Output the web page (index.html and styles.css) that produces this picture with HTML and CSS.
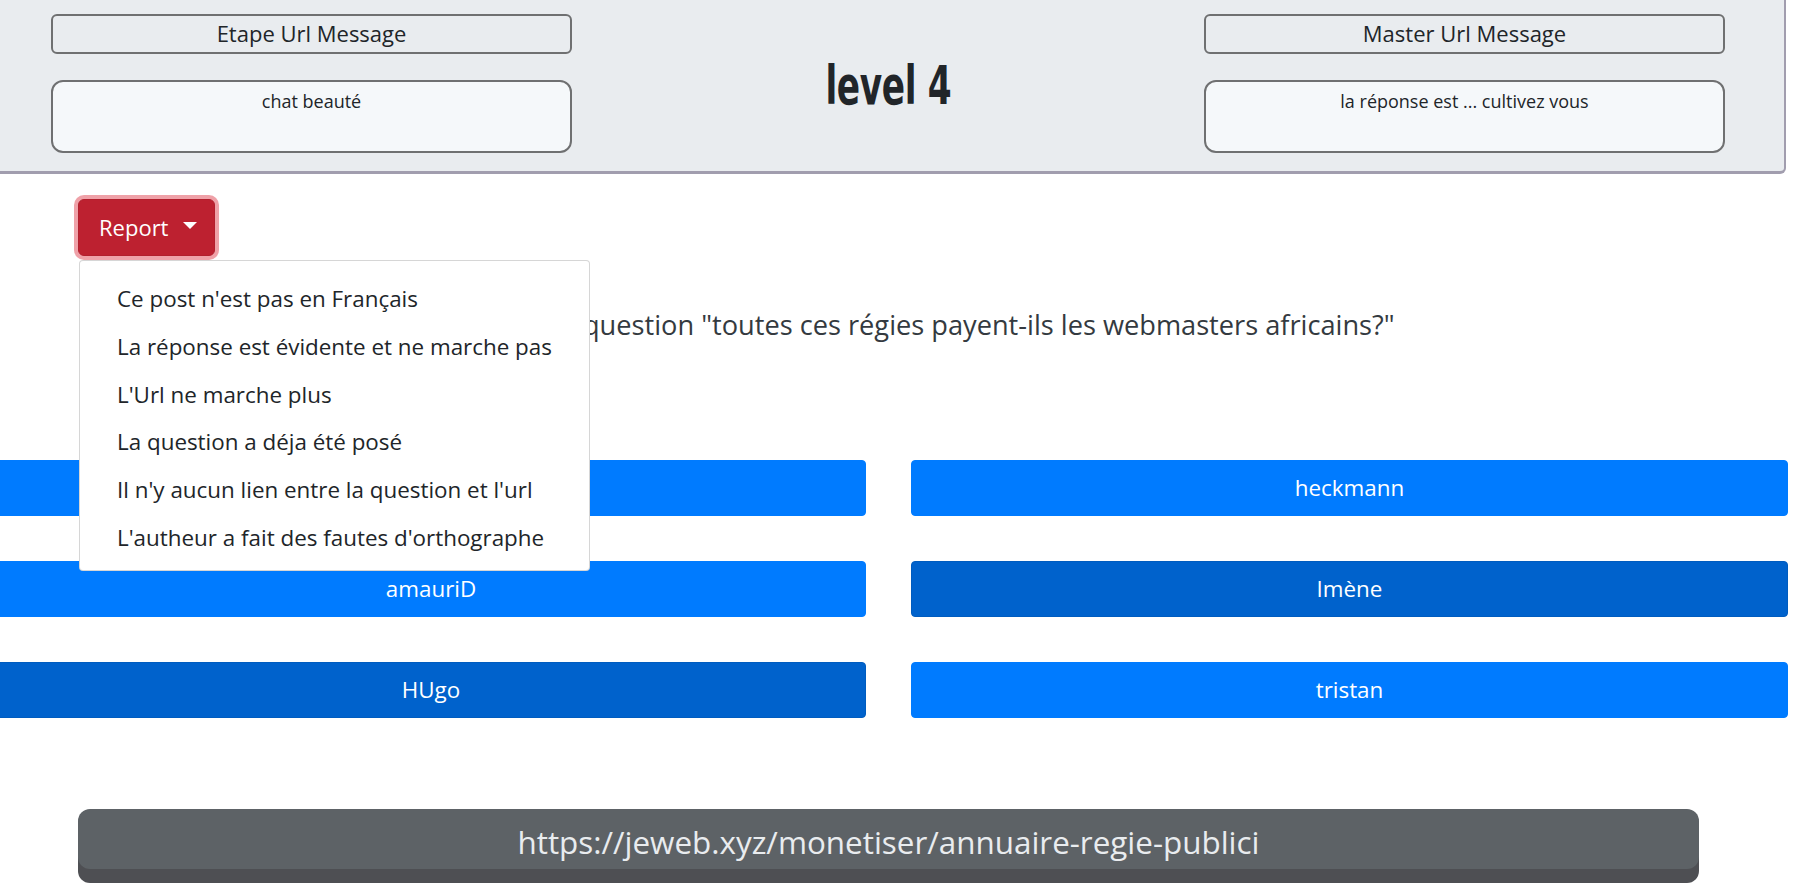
FILE: index.html
```html
<!DOCTYPE html>
<html lang="fr">
<head>
<meta charset="utf-8">
<title>level 4</title>
<link rel="stylesheet" href="styles.css">
</head>
<body>
<header class="top">
  <div class="side">
    <div class="label-box">Etape Url Message</div>
    <div class="msg-box">chat beauté</div>
  </div>
  <div class="center">
    <h1 class="level"><span class="level-text">level 4</span></h1>
  </div>
  <div class="side">
    <div class="label-box">Master Url Message</div>
    <div class="msg-box">la réponse est ... cultivez vous</div>
  </div>
</header>

<main class="main">
  <div class="report">
    <button class="report-btn" type="button">Report<span class="caret"></span></button>
    <ul class="menu">
      <li class="menu-item">Ce post n'est pas en Français</li>
      <li class="menu-item">La réponse est évidente et ne marche pas</li>
      <li class="menu-item">L'Url ne marche plus</li>
      <li class="menu-item">La question a déja été posé</li>
      <li class="menu-item">Il n'y aucun lien entre la question et l'url</li>
      <li class="menu-item">L'autheur a fait des fautes d'orthographe</li>
    </ul>
  </div>

  <p class="question">Répondez à la question "toutes ces régies payent-ils les webmasters africains?"</p>

  <div class="answers">
    <button class="answer" type="button">leo</button>
    <button class="answer" type="button">heckmann</button>
    <button class="answer" type="button">amauriD</button>
    <button class="answer active" type="button">Imène</button>
    <button class="answer active" type="button">HUgo</button>
    <button class="answer" type="button">tristan</button>
  </div>

  <div class="url-bar">https://jeweb.xyz/monetiser/annuaire-regie-publici</div>
</main>
</body>
</html>
```

FILE: styles.css
```css
html, body {
  margin: 0;
  padding: 0;
  background: #ffffff;
  overflow: hidden;
}

body {
  font-family: "Open Sans", "Noto Sans", sans-serif;
  color: #212529;
  width: 1793px;
  height: 886px;
}

.top {
  display: grid;
  grid-template-columns: 521px 1fr 521px;
  margin: 0 7px 0 -10px;
  padding: 14px 59px 18px 61px;
  background: #e9ecef;
  border-right: 2px solid #a19dae;
  border-bottom: 3px solid #a19dae;
  border-bottom-right-radius: 6px;
}

.side {
  display: flex;
  flex-direction: column;
  gap: 26px;
}

.label-box {
  box-sizing: border-box;
  height: 40px;
  border: 2px solid #6f7071;
  border-radius: 6px;
  font-size: 22px;
  line-height: 35px;
  text-align: center;
  color: #212529;
}

.msg-box {
  box-sizing: border-box;
  height: 73px;
  border: 2px solid #6f7071;
  border-radius: 12px;
  background: #f5f8fa;
  padding-top: 7px;
  font-size: 18px;
  line-height: 24px;
  text-align: center;
  color: #212529;
}

.center {
  display: flex;
  align-items: center;
  justify-content: center;
}

.level {
  margin: 4px 0 0 0;
  font-family: "DejaVu Sans Condensed", "DejaVu Sans", sans-serif;
  font-weight: 700;
  font-size: 53px;
  line-height: 60px;
  color: #212529;
}

.level-text {
  display: inline-block;
  transform: scaleX(0.72);
  letter-spacing: -0.5px;
}

.main {
  padding-top: 25px;
}

.report {
  position: relative;
  margin-left: 78px;
  width: 137px;
}

.report-btn {
  box-sizing: border-box;
  display: flex;
  align-items: center;
  width: 137px;
  height: 57px;
  padding: 0 0 0 20px;
  border: 1px solid #b21f2d;
  border-radius: 6px;
  background: #bd2130;
  color: #ffffff;
  font-family: "Open Sans", "Noto Sans", sans-serif;
  font-size: 22px;
  line-height: 33px;
  box-shadow: 0 0 0 4px rgba(225, 83, 97, 0.55);
}

.caret {
  display: inline-block;
  width: 0;
  height: 0;
  margin-left: 15px;
  margin-top: -4px;
  border-top: 7px solid #ffffff;
  border-left: 7px solid transparent;
  border-right: 7px solid transparent;
}

.menu {
  position: absolute;
  top: 61px;
  left: 1px;
  z-index: 5;
  box-sizing: border-box;
  width: 511px;
  margin: 0;
  padding: 14px 0 8px 0;
  list-style: none;
  background: #ffffff;
  border: 1px solid rgba(0, 0, 0, 0.16);
  border-radius: 4px;
}

.menu-item {
  height: 47.8px;
  padding-left: 37px;
  font-size: 22.4px;
  line-height: 47.8px;
  color: #212529;
  white-space: nowrap;
}

.question {
  margin: 51px 0 0 0;
  font-size: 27.2px;
  line-height: 36px;
  text-align: center;
  color: #343a40;
}

.answers {
  display: grid;
  grid-template-columns: 870px 877px;
  column-gap: 45px;
  row-gap: 45px;
  margin: 117px 0 0 -4px;
}

.answer {
  height: 56px;
  border: 1px solid #007bff;
  border-radius: 4px;
  background: #007bff;
  color: #ffffff;
  font-family: "Open Sans", "Noto Sans", sans-serif;
  font-size: 22.4px;
  line-height: 30px;
  padding: 0;
}

.answer.active {
  background: #0062cc;
  border-color: #005cbf;
}

.url-bar {
  box-sizing: border-box;
  width: 1621px;
  height: 60px;
  margin: 91px 0 0 78px;
  padding-top: 5px;
  border-radius: 12px;
  background: #5d6266;
  box-shadow: 0 14px 0 0 #4e4f53;
  color: #e9ecef;
  font-size: 31.4px;
  line-height: 56px;
  text-align: center;
}
```
